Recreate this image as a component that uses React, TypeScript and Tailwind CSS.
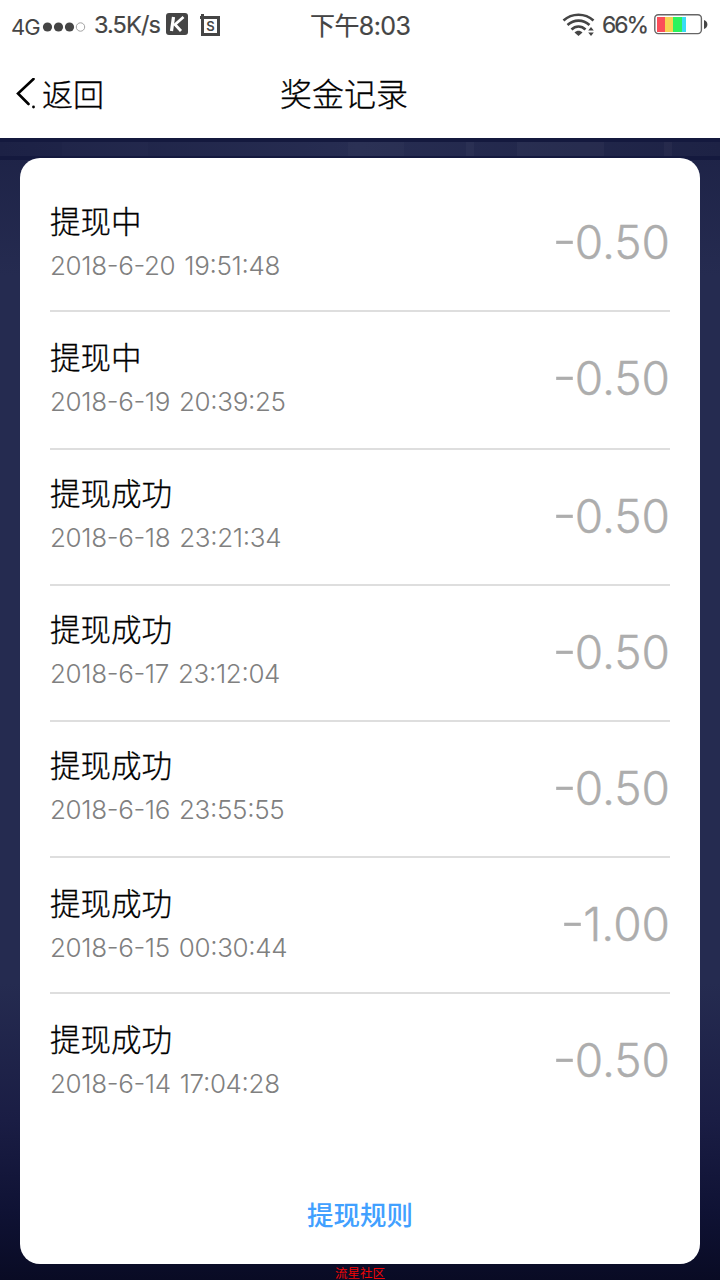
import { clsx } from "clsx";

interface BonusRecord {
  status: string;
  time: string;
  amount: string;
  rowClass: string;
  titleClass: string;
}

const records: BonusRecord[] = [
  { status: "提现中", time: "2018-6-20 19:51:48", amount: "0.50", rowClass: "h-[136px]", titleClass: "pt-[26px]" },
  { status: "提现中", time: "2018-6-19 20:39:25", amount: "0.50", rowClass: "h-[138px]", titleClass: "pt-[26px]" },
  { status: "提现成功", time: "2018-6-18 23:21:34", amount: "0.50", rowClass: "h-[136px]", titleClass: "pt-[24px]" },
  { status: "提现成功", time: "2018-6-17 23:12:04", amount: "0.50", rowClass: "h-[136px]", titleClass: "pt-[24px]" },
  { status: "提现成功", time: "2018-6-16 23:55:55", amount: "0.50", rowClass: "h-[136px]", titleClass: "pt-[24px]" },
  { status: "提现成功", time: "2018-6-15 00:30:44", amount: "1.00", rowClass: "h-[136px]", titleClass: "pt-[26px]" },
  { status: "提现成功", time: "2018-6-14 17:04:28", amount: "0.50", rowClass: "h-[136px]", titleClass: "pt-[26px]" },
];

function WifiIcon() {
  return (
    <svg width="34" height="26" viewBox="0 0 34 26" fill="none" stroke="#454545" strokeWidth="2.6">
      <path d="M1.5 8.5C10 0.8 23 0.8 31.5 8.5" />
      <path d="M5.5 13C12 7.2 21 7.2 27.5 13" />
      <path d="M9.5 17.5C13.5 13.5 19.5 13.5 23.5 17.5" />
      <path d="M12.5 20.5C15 18.2 18 18.2 20.5 20.5L16.5 24Z" fill="#454545" stroke="none" />
      <path d="M29 15L31.8 18.5H26.2ZM29 24L26.2 20.5H31.8Z" fill="#454545" stroke="none" />
    </svg>
  );
}

function BatteryIcon() {
  return (
    <svg width="54" height="21" viewBox="0 0 54 21" fill="none" className="-mt-px">
      <rect x="0.8" y="0.8" width="46.6" height="18.8" rx="3.5" stroke="#666" strokeWidth="1.4" />
      <path d="M3 3H11V18H3Z" fill="#fb4d59" />
      <path d="M11 3H19V18H11Z" fill="#f6d251" />
      <path d="M19 3H28V18H19Z" fill="#2bf35d" />
      <path d="M28 3H32V18H28Z" fill="#38dcf5" />
      <path d="M50 6C54.5 7 54.5 14 50 15Z" fill="#454545" />
    </svg>
  );
}

function StatusBar() {
  return (
    <div className="grid h-[50px] grid-cols-[310px_252px_1fr] items-center text-[#454545]">
      <div className="flex items-center pl-[11px]">
        <span className="w-[31px] pt-[3px] text-[22px] leading-none tracking-[-1px]">4G</span>
        <svg width="44" height="12" viewBox="0 0 44 12" className="mt-1" fill="#454545">
          <circle cx="5.5" cy="6" r="4.6" />
          <circle cx="16.5" cy="6" r="4.6" />
          <circle cx="27.5" cy="6" r="4.6" />
          <circle cx="38.5" cy="6" r="4.2" fill="none" stroke="#999" strokeWidth="0.9" />
        </svg>
        <span className="ml-2 w-[72px] text-[23.5px] leading-none tracking-[-0.9px] [-webkit-text-stroke:0.2px_#454545]">
          3.5K/s
        </span>
        <svg width="22" height="22" viewBox="0 0 22 22" className="-mt-0.5">
          <rect width="22" height="22" rx="3" fill="#454545" />
          <path d="M7.5 4L5.5 18" stroke="#fff" strokeWidth="3.2" fill="none" />
          <path d="M17.5 4L9 11.5L15 18" stroke="#fff" strokeWidth="2.8" fill="none" />
        </svg>
        <svg width="20" height="23" viewBox="0 0 20 23" className="ml-3" fill="none">
          <path d="M2.5 0V20.5H18.5V3.5H0" stroke="#454545" strokeWidth="3" />
          <text x="10.4" y="16.5" textAnchor="middle" fontSize="13" fontWeight="600" fill="#454545">S</text>
        </svg>
      </div>
      <div className="pt-0.5 text-[25px] leading-none tracking-[-0.6px] [-webkit-text-stroke:0.2px_#454545]">下午8:03</div>
      <div className="flex items-center">
        <WifiIcon />
        <span className="ml-1.5 w-[52px] text-[23px] leading-none tracking-[-2px] [-webkit-text-stroke:0.2px_#454545]">66%</span>
        <BatteryIcon />
      </div>
    </div>
  );
}

function NavBar() {
  return (
    <header className="grid h-[88px] grid-cols-[280px_1fr] items-center text-[32px] leading-none font-light text-black [-webkit-text-stroke:0.3px_#000]">
      <button type="button" className="flex items-center pl-4 text-[31px]">
        <svg width="26" height="32" viewBox="0 0 26 32" fill="none" stroke="#000" strokeWidth="2.6" strokeLinecap="round">
          <path d="M17.5 1L2 15.5L12.5 26" />
          <circle cx="17.5" cy="29" r="1.4" fill="#000" stroke="none" />
        </svg>
        <span>返回</span>
      </button>
      <h1 className="pt-0.5">奖金记录</h1>
    </header>
  );
}

function RecordRow({ record, last }: { record: BonusRecord; last: boolean }) {
  return (
    <li
      className={clsx(
        "flex justify-between border-b-2",
        last ? "border-transparent" : "border-[#dedede]",
        record.rowClass
      )}
    >
      <div className={record.titleClass}>
        <p className="h-10 text-[30.5px] leading-10 font-light whitespace-nowrap text-black [-webkit-text-stroke:0.3px_#000]">
          {record.status}
        </p>
        <p className="pt-1 text-[26px] leading-10 font-light tracking-[-0.35px] [word-spacing:2px] whitespace-nowrap text-[#808080] [font-feature-settings:'case']">
          {record.time}
        </p>
      </div>
      <div className="flex pt-[38px] text-[46px] leading-[56px] font-light whitespace-nowrap text-[#adadad] [font-feature-settings:'case'] [-webkit-text-stroke:0.4px_#adadad]">
        <span className="scale-x-115">-</span>
        <span>{record.amount}</span>
      </div>
    </li>
  );
}

export default function App() {
  return (
    <div className="flex h-[1280px] w-[720px] flex-col overflow-hidden bg-white font-['Inter','Noto_Sans_CJK_SC',sans-serif]">
      <StatusBar />
      <NavBar />
      <main className="flex flex-1 flex-col bg-[linear-gradient(to_bottom,#1d2246_0%,#252b50_12%,#252b50_74%,#1a1d44_86%,#0f1234_94%,#090b24_100%)]">
        <div className="h-1 bg-[#14193e]" />
        <div className="flex h-3.5 bg-linear-to-r from-[#1c2145] via-[#272d52] to-[#1d2245]">
          <div className="w-[62px]" />
          <div className="w-[86px] bg-white/1" />
          <div className="w-[128px]" />
          <div className="w-[72px]" />
          <div className="w-[56px] bg-white/2" />
          <div className="w-[62px]" />
          <div className="w-2 bg-white/3" />
          <div className="w-[43px]" />
          <div className="w-[87px] bg-white/3" />
          <div className="w-[60px]" />
          <div className="w-2 bg-white/3" />
        </div>
        <div className="h-1 bg-[#14193e]" />
        <section className="mx-5 -mt-0.5 flex h-[1106px] shrink-0 flex-col rounded-[20px] bg-white px-[30px] pt-[18px]">
          <ul>
            {records.map((record, i) => (
              <RecordRow key={record.time} record={record} last={i === records.length - 1} />
            ))}
          </ul>
          <button type="button" className="mt-[65px] text-[26.5px] leading-10 font-medium text-[#41a0ff]">
            提现规则
          </button>
        </section>
        <footer className="h-4 pt-[3px] text-center text-[12.5px] leading-[13px] text-[#f00505]">流星社区</footer>
      </main>
    </div>
  );
}
